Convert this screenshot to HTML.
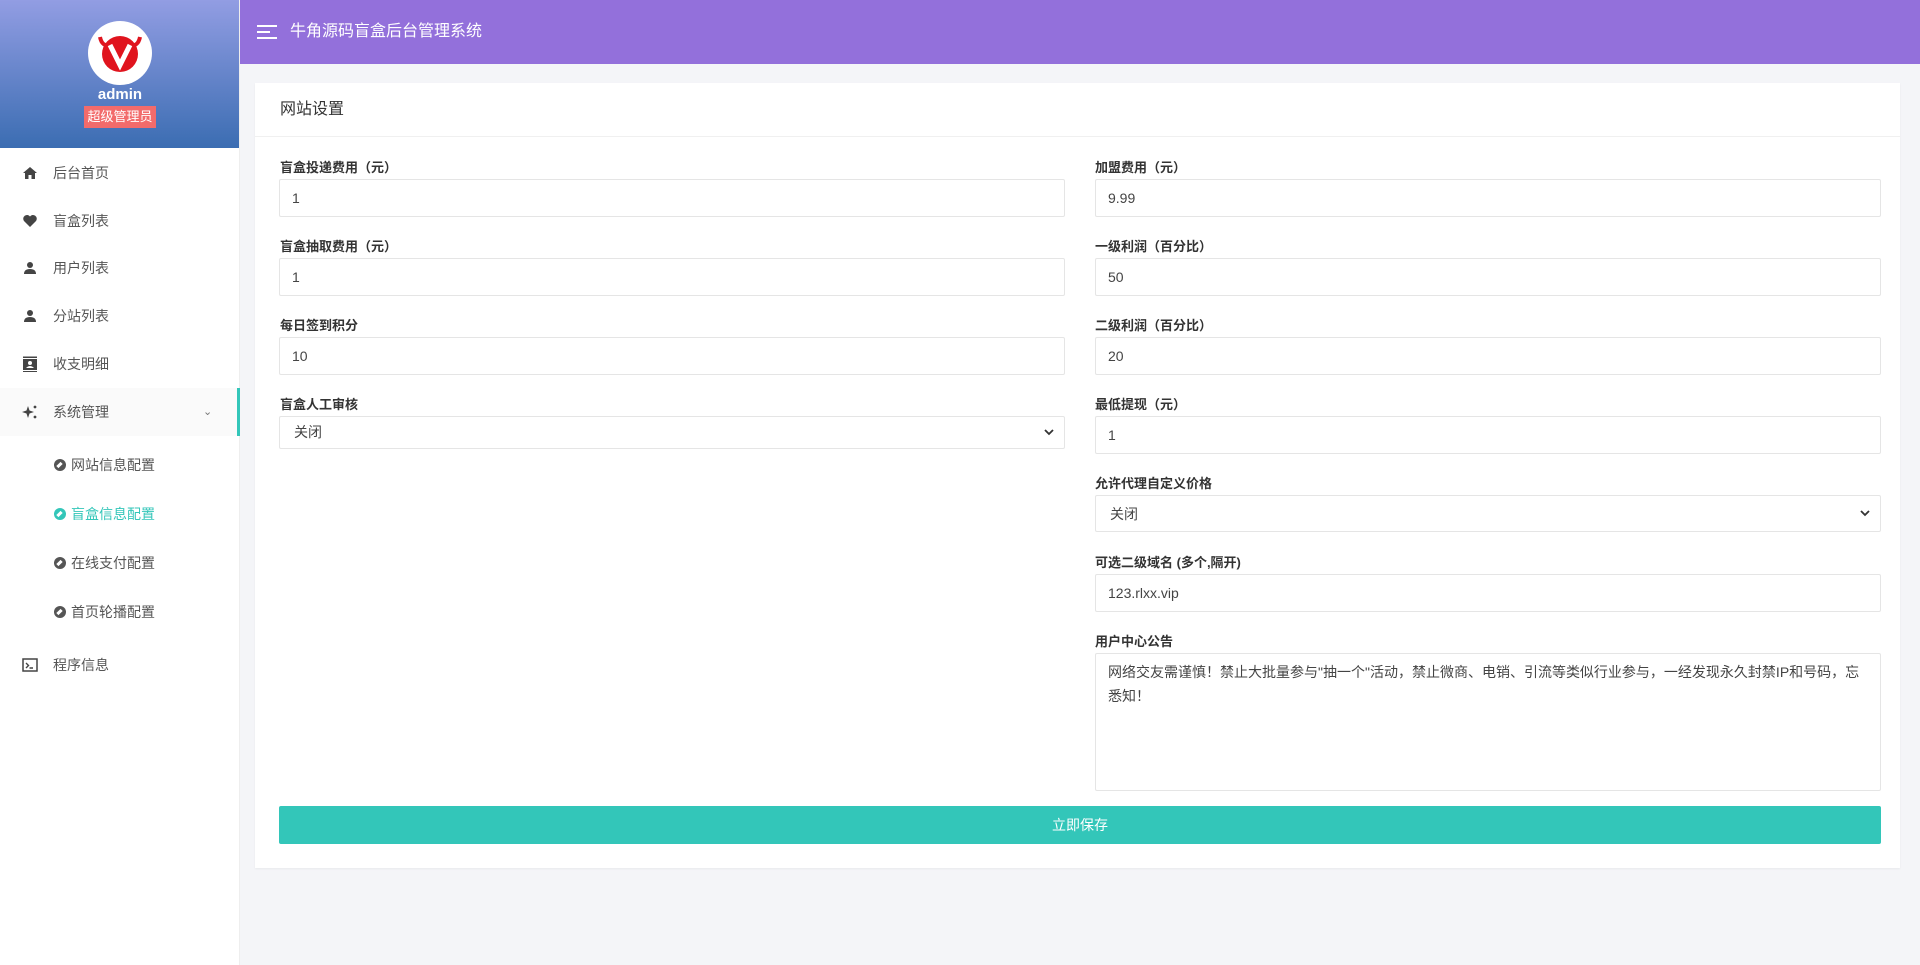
<!DOCTYPE html>
<html><head><meta charset="utf-8"><style>
*{box-sizing:border-box;margin:0;padding:0}
body{width:1920px;height:965px;overflow:hidden;background:#f4f5f8;font-family:"Liberation Sans","Noto Sans CJK SC",sans-serif;color:#333;position:relative}
.side{position:absolute;left:0;top:0;width:240px;height:965px;background:#fff;border-right:1px solid #eee}
.prof{height:148px;background:linear-gradient(#929de3,#3b6db2);text-align:center;position:relative}
.av{position:absolute;left:88px;top:21px;width:64px;height:64px;border-radius:50%;background:#fff}
.nm{position:absolute;top:86px;left:0;width:240px;color:#fff;font-weight:bold;font-size:15px}
.bd{position:absolute;top:106px;left:84px;width:72px;height:22px;background:#f26b6b;color:#fff;font-size:13px;line-height:22px}
.mi{position:absolute;left:0;width:240px;height:48px;line-height:48px;font-size:14px;color:#555}
.mi .ic{position:absolute;left:22px;top:16px;width:16px;height:16px}
.mi span{position:absolute;left:53px}
.sub{position:absolute;left:54px;font-size:14px;color:#555;line-height:20px}
.sub i{display:inline-block;width:12px;height:12px;border-radius:50%;background:#555;margin-right:5px;vertical-align:-1px;position:relative}
.sub i:after{content:"";position:absolute;left:4px;top:3px;width:3px;height:6px;background:#fff;transform:rotate(45deg)}
.top{position:absolute;left:240px;top:0;width:1680px;height:64px;background:#9370db;color:#fff;font-size:16px;line-height:64px}
.card{position:absolute;left:255px;top:83px;width:1645px;height:785px;background:#fff;box-shadow:0 1px 2px rgba(0,0,0,.05)}
.ch{height:54px;border-bottom:1px solid #f0f0f0;line-height:54px;padding-left:25px;font-size:16px;color:#333}
.lb{position:absolute;font-size:13px;font-weight:bold;color:#333}
.in{position:absolute;height:38px;border:1px solid #e5e5e5;border-radius:2px;font-size:14px;line-height:36px;padding-left:12px;color:#444;width:786px}
.sel{padding-left:14px}
.sel svg{position:absolute;right:10px;top:50%;margin-top:-4px}
</style></head><body>
<div class="side">
 <div class="prof">
  <div class="av"><svg width="64" height="64" viewBox="0 0 64 64"><circle cx="32" cy="33" r="18" fill="#e0141e"/><path d="M12 16 Q14 26 22 24 M52 16 Q50 26 42 24" stroke="#e0141e" stroke-width="4" fill="none"/><path d="M22 24 L32 44 L42 24" stroke="#fff" stroke-width="5" fill="none"/></svg></div>
  <div class="nm">admin</div>
  <div class="bd">超级管理员</div>
 </div>
 <div class="mi" style="top:149px"><svg class="ic" viewBox="0 0 16 16"><path d="M8 2 L1 8 H3 V14 H6.5 V10 H9.5 V14 H13 V8 H15Z" fill="#444"/></svg><span>后台首页</span></div>
 <div class="mi" style="top:197px"><svg class="ic" viewBox="0 0 16 16"><path d="M8 14 L2 8 A3.3 3.3 0 0 1 8 3.5 A3.3 3.3 0 0 1 14 8Z" fill="#444"/></svg><span>盲盒列表</span></div>
 <div class="mi" style="top:244px"><svg class="ic" viewBox="0 0 16 16"><circle cx="8" cy="5" r="3" fill="#444"/><path d="M2 14 Q2 9 8 9 Q14 9 14 14Z" fill="#444"/></svg><span>用户列表</span></div>
 <div class="mi" style="top:292px"><svg class="ic" viewBox="0 0 16 16"><circle cx="8" cy="5" r="3" fill="#444"/><path d="M2 14 Q2 9 8 9 Q14 9 14 14Z" fill="#444"/></svg><span>分站列表</span></div>
 <div class="mi" style="top:340px"><svg class="ic" viewBox="0 0 16 16"><rect x="1" y="3" width="14" height="11" fill="#444"/><rect x="1" y="0.5" width="14" height="1.5" fill="#444"/><rect x="1" y="15" width="14" height="1" fill="#444"/><circle cx="8" cy="7" r="2" fill="#fff"/><path d="M4 12 Q8 8 12 12Z" fill="#fff"/></svg><span>收支明细</span></div>
 <div class="mi" style="top:388px;background:#fafafa;border-right:3px solid #33c6b9"><svg class="ic" viewBox="0 0 16 16"><path d="M6 2 L7.5 6.5 L12 8 L7.5 9.5 L6 14 L4.5 9.5 L0 8 L4.5 6.5Z" fill="#444"/><circle cx="13" cy="3" r="1.4" fill="#444"/><circle cx="13" cy="13" r="1.4" fill="#444"/></svg><span>系统管理</span><span style="left:203px;font-size:11px;color:#777">⌄</span></div>
 <div class="sub" style="top:455px"><i></i>网站信息配置</div>
 <div class="sub" style="top:504px;color:#33c6b9"><i style="background:#33c6b9"></i>盲盒信息配置</div>
 <div class="sub" style="top:553px"><i></i>在线支付配置</div>
 <div class="sub" style="top:602px"><i></i>首页轮播配置</div>
 <div class="mi" style="top:641px"><svg class="ic" viewBox="0 0 16 16"><rect x="1" y="2" width="14" height="12" fill="none" stroke="#444" stroke-width="1.5"/><path d="M4 6 L6.5 8.5 L4 11 M7.5 11 H11" stroke="#444" stroke-width="1.4" fill="none"/></svg><span>程序信息</span></div>
</div>
<div class="top"><svg style="position:absolute;left:17px;top:24px" width="20" height="16" viewBox="0 0 20 16"><path d="M0 2H20M0 8H13M0 14H20" stroke="#fff" stroke-width="2"/></svg><span style="position:absolute;left:50px">牛角源码盲盒后台管理系统</span></div>
<div class="card">
 <div class="ch">网站设置</div>
 <div class="lb" style="left:25px;top:74px">盲盒投递费用（元）</div>
 <div class="in" style="left:24px;top:96px">1</div>
 <div class="lb" style="left:25px;top:153px">盲盒抽取费用（元）</div>
 <div class="in" style="left:24px;top:175px">1</div>
 <div class="lb" style="left:25px;top:232px">每日签到积分</div>
 <div class="in" style="left:24px;top:254px">10</div>
 <div class="lb" style="left:25px;top:311px">盲盒人工审核</div>
 <div class="in sel" style="left:24px;top:333px;height:33px;line-height:31px">关闭<svg width="10" height="7" viewBox="0 0 10 7"><path d="M1 1L5 5L9 1" stroke="#333" stroke-width="1.8" fill="none"/></svg></div>

 <div class="lb" style="left:840px;top:74px">加盟费用（元）</div>
 <div class="in" style="left:840px;top:96px">9.99</div>
 <div class="lb" style="left:840px;top:153px">一级利润（百分比）</div>
 <div class="in" style="left:840px;top:175px">50</div>
 <div class="lb" style="left:840px;top:232px">二级利润（百分比）</div>
 <div class="in" style="left:840px;top:254px">20</div>
 <div class="lb" style="left:840px;top:311px">最低提现（元）</div>
 <div class="in" style="left:840px;top:333px">1</div>
 <div class="lb" style="left:840px;top:390px">允许代理自定义价格</div>
 <div class="in sel" style="left:840px;top:412px;height:37px">关闭<svg width="10" height="7" viewBox="0 0 10 7"><path d="M1 1L5 5L9 1" stroke="#333" stroke-width="1.8" fill="none"/></svg></div>
 <div class="lb" style="left:840px;top:469px">可选二级域名 (多个,隔开)</div>
 <div class="in" style="left:840px;top:491px">123.rlxx.vip</div>
 <div class="lb" style="left:840px;top:548px">用户中心公告</div>
 <div class="in" style="left:840px;top:570px;height:138px;line-height:24px;padding-top:6px;padding-right:8px;font-size:14px">网络交友需谨慎！禁止大批量参与"抽一个"活动，禁止微商、电销、引流等类似行业参与，一经发现永久封禁IP和号码，忘悉知！</div>
 <div style="position:absolute;left:24px;top:723px;width:1602px;height:38px;background:#33c6b9;border-radius:2px;color:#fff;text-align:center;line-height:38px;font-size:14px">立即保存</div>
</div>
</body></html>
